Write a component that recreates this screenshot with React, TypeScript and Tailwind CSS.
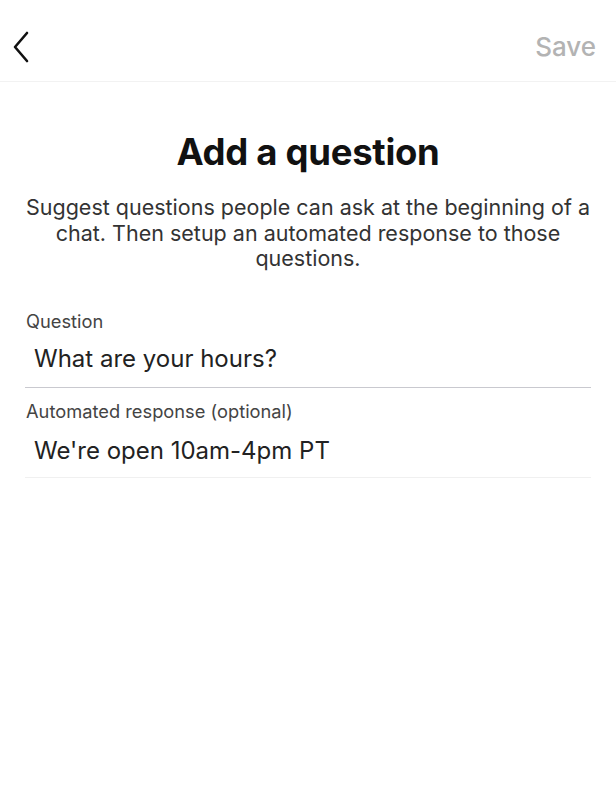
import React from "react";

export default function App() {
  return (
    <div className="w-[616px] h-[800px] bg-white text-[#111] overflow-hidden" style={{ fontFamily: "Inter, 'Noto Sans', sans-serif" }}>
      <div className="h-[82px] flex items-center justify-between pl-[12px] pr-[20px] pt-[14px] border-b border-[#f2f2f2]">
        <svg width="18" height="32" viewBox="0 0 18 32" fill="none" className="mt-[-2px]">
          <path d="M15 2 L3 16 L15 30" stroke="#111" strokeWidth="2.6" strokeLinecap="round" strokeLinejoin="round" />
        </svg>
        <span className="text-[26px] text-[#b3b3b3] font-medium mt-[-3px]">Save</span>
      </div>
      <div className="flex flex-col items-center pt-[48px]">
        <h1 className="text-[36.5px] font-bold leading-[44px] tracking-[-0.3px] text-[#111]">Add a question</h1>
        <p className="mt-[21px] text-[21.5px] leading-[25.5px] text-center text-[#333] px-[20px]">
          Suggest questions people can ask at the beginning of a chat. Then setup an automated response to those questions.
        </p>
      </div>
      <div className="px-[25px] mt-[37px]">
        <div className="text-[18.3px] text-[#444] leading-[24px] pl-[1px]">Question</div>
        <div className="text-[24px] text-[#222] leading-[32px] pl-[9px] mt-[10px] pb-[12px] border-b border-[#c9c9cf]">What are your hours?</div>
        <div className="text-[18.3px] text-[#444] leading-[24px] pl-[1px] mt-[11px]">Automated response (optional)</div>
        <div className="text-[24px] text-[#222] leading-[32px] pl-[9px] mt-[12px] pb-[10px] border-b border-[#f0f0f0]">We're open 10am-4pm PT</div>
      </div>
    </div>
  );
}
